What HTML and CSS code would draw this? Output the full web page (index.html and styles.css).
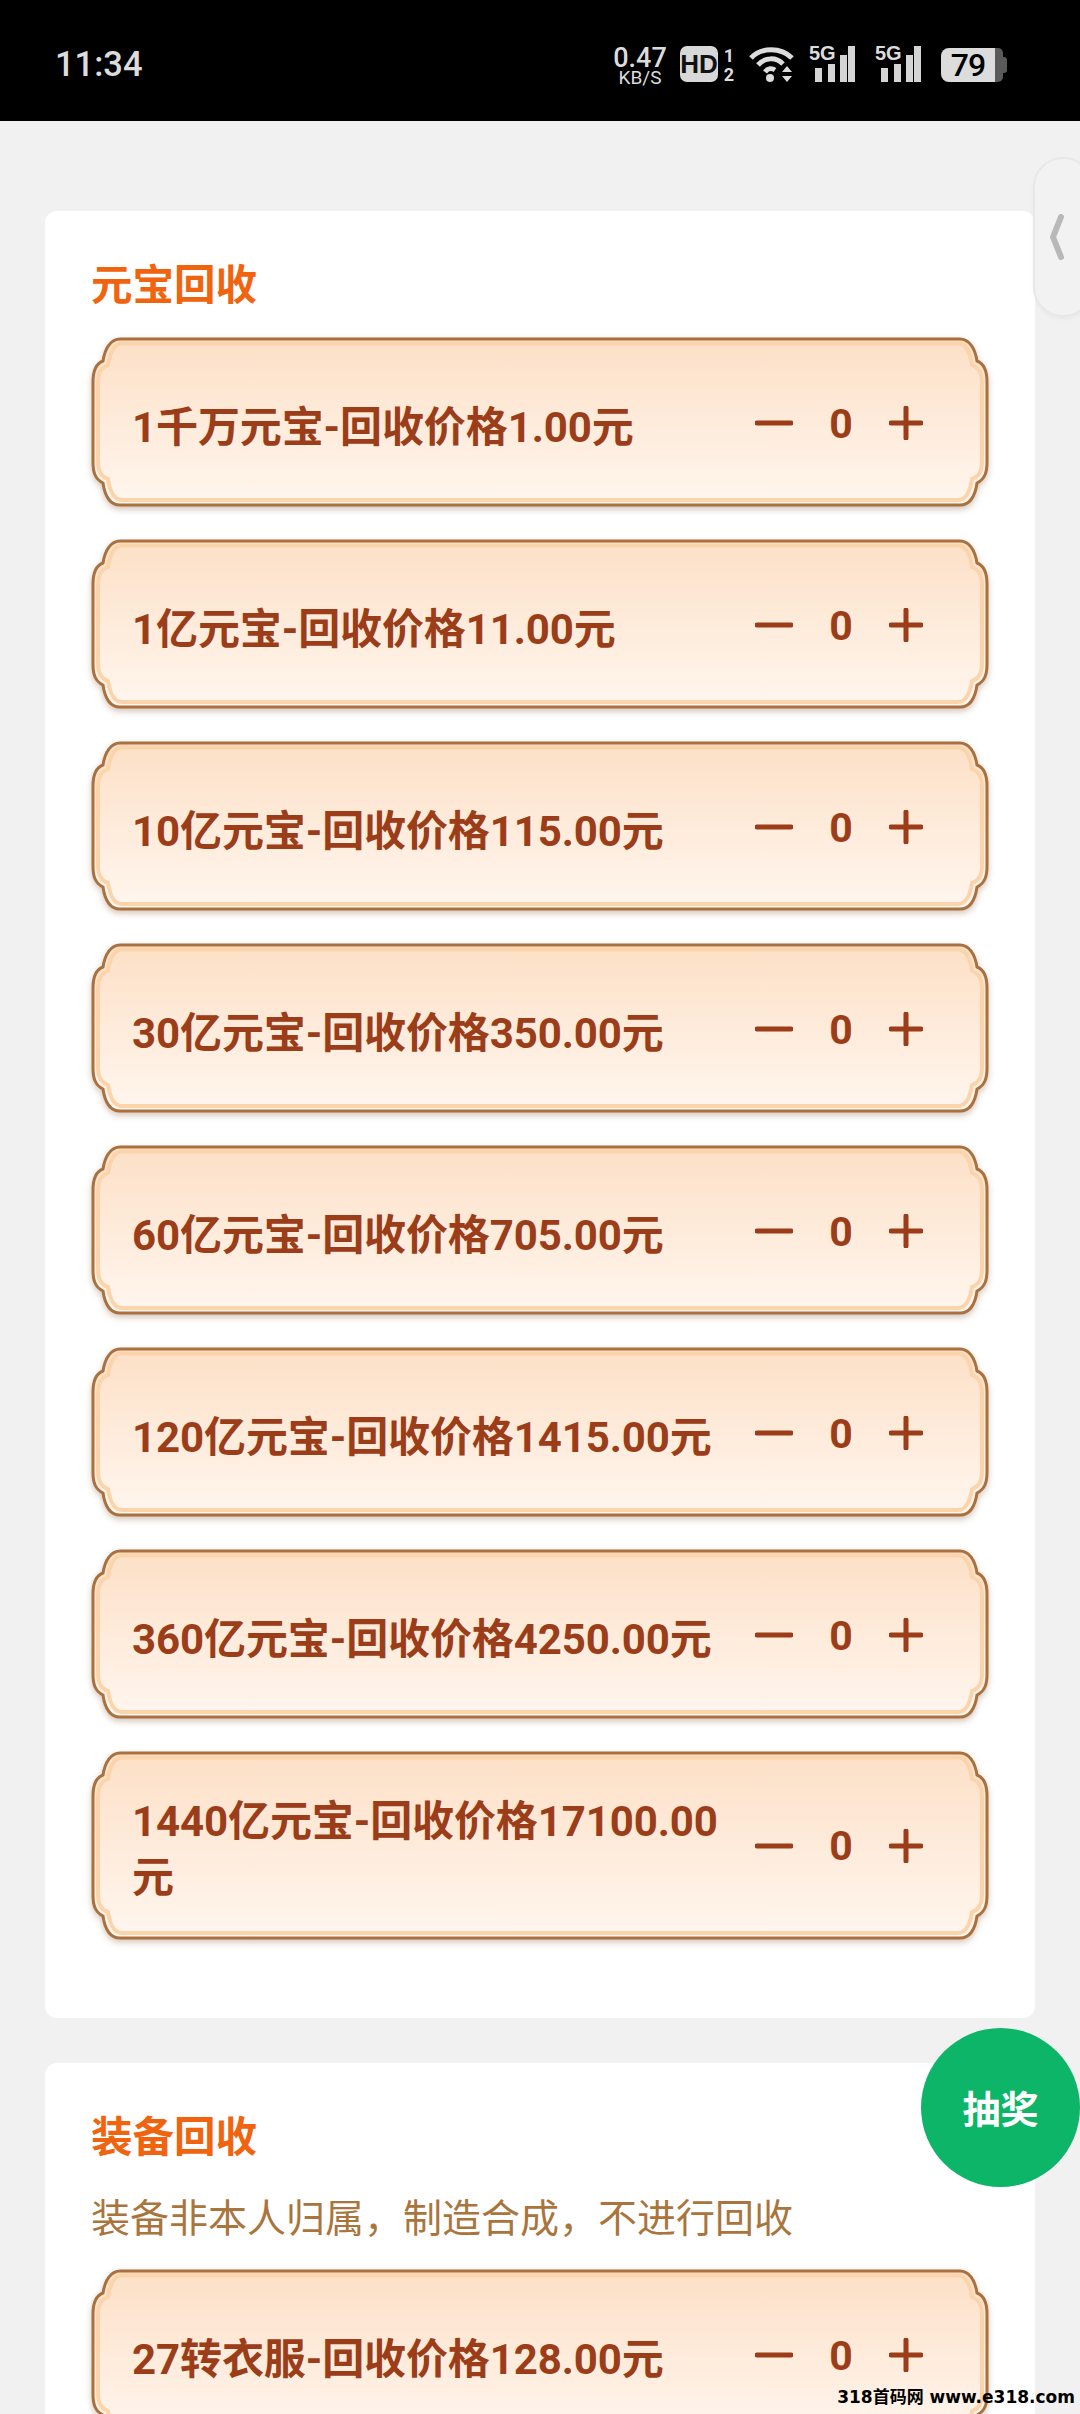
FILE: index.html
```html
<!DOCTYPE html>
<html lang="zh-CN">
<head>
    <meta charset="UTF-8">
    <title>元宝回收</title>
    <meta name="viewport" content="width=device-width, initial-scale=1.0">
    <link rel="stylesheet" href="styles.css">
</head>
<body>
    <svg class="defs" width="0" height="0">
        <defs>
            <linearGradient id="rowfill" x1="0" y1="0" x2="0" y2="1">
                <stop offset="0" stop-color="#fde0c7"/>
                <stop offset="1" stop-color="#fff6ee"/>
            </linearGradient>
            <symbol id="frame" viewBox="0 0 900 174">
                <path d="M30 3H870C879 3 885 12 887 25C895 28 897 36 897 46V126C897 136 895 143 887 147C885 161 879 169 870 169H30C21 169 15 161 13 147C5 143 3 136 3 126V46C3 36 5 28 13 25C15 12 21 3 30 3Z" fill="url(#rowfill)" stroke="#a9713f" stroke-width="3"/>
                <path d="M32 7.5H868C876 7.5 880 16 882 29C890 32 892 38 892 48V124C892 134 890 140 882 143C880 156 876 164 868 164H32C24 164 20 156 18 143C10 140 8 134 8 124V48C8 38 10 32 18 29C20 16 24 7.5 32 7.5Z" fill="none" stroke="#fbd4ab" stroke-width="4"/>
            </symbol>
            <symbol id="frame-tall" viewBox="0 0 900 194">
                <path d="M30 3H870C879 3 885 12 887 25C895 28 897 36 897 46V145C897 155 895 162 887 166C885 180 879 188 870 188H30C21 188 15 180 13 166C5 162 3 155 3 145V46C3 36 5 28 13 25C15 12 21 3 30 3Z" fill="url(#rowfill)" stroke="#a9713f" stroke-width="3"/>
                <path d="M32 7.5H868C876 7.5 880 16 882 29C890 32 892 38 892 48V143C892 153 890 159 882 162C880 175 876 183 868 183H32C24 183 20 175 18 162C10 159 8 153 8 143V48C8 38 10 32 18 29C20 16 24 7.5 32 7.5Z" fill="none" stroke="#fbd4ab" stroke-width="4"/>
            </symbol>
            <symbol id="minus" viewBox="0 0 38 34">
                <path d="M2 17H36" stroke="#9c3d19" stroke-width="5" stroke-linecap="round"/>
            </symbol>
            <symbol id="plus" viewBox="0 0 34 34">
                <path d="M2 17H32M17 2V32" stroke="#9c3d19" stroke-width="5" stroke-linecap="round" fill="none"/>
            </symbol>
            <symbol id="bars" viewBox="0 0 46 36">
                <rect x="6" y="22" width="7" height="14"/>
                <rect x="19" y="18" width="7" height="18"/>
                <rect x="31" y="9" width="7" height="27"/>
                <rect x="39" y="0" width="7" height="36"/>
            </symbol>
        </defs>
    </svg>

    <header class="statusbar">
        <span class="clock">11:34</span>
        <div class="status-icons">
            <div class="speed"><span class="speed-num">0.47</span><span class="speed-unit">KB/S</span></div>
            <span class="hd">HD</span>
            <div class="sim-nums"><span>1</span><span>2</span></div>
            <svg class="wifi" width="46" height="36" viewBox="0 0 46 36" fill="none" stroke="#dcdcdc" stroke-width="5">
                <path d="M2 12C12 1 32 1 43 12"/>
                <path d="M9 19C16 11 27 11 34 18"/>
                <path d="M16 26C19 22 23 22 26 24"/>
                <circle cx="21" cy="32" r="4" fill="#dcdcdc" stroke="none"/>
                <path d="M33 26L38 20L43 26ZM33 30L38 36L43 30Z" fill="#dcdcdc" stroke="none"/>
            </svg>
            <div class="signal">
                <span class="signal-label">5G</span>
                <svg class="signal-bars" width="46" height="36"><use href="#bars"/></svg>
            </div>
            <div class="signal">
                <span class="signal-label">5G</span>
                <svg class="signal-bars" width="46" height="36"><use href="#bars"/></svg>
            </div>
            <div class="battery"><span class="battery-level">79</span><span class="battery-rest"></span><span class="battery-cap"></span></div>
        </div>
    </header>

    <main class="page">
        <section class="card card-first">
            <h2 class="card-title">元宝回收</h2>
            <div class="rows">
                <div class="row">
                    <svg class="row-bg"><use href="#frame"/></svg>
                    <div class="row-name">1千万元宝-回收价格1.00元</div>
                    <div class="stepper"><svg class="btn-minus"><use href="#minus"/></svg><span class="count">0</span><svg class="btn-plus"><use href="#plus"/></svg></div>
                </div>
                <div class="row">
                    <svg class="row-bg"><use href="#frame"/></svg>
                    <div class="row-name">1亿元宝-回收价格11.00元</div>
                    <div class="stepper"><svg class="btn-minus"><use href="#minus"/></svg><span class="count">0</span><svg class="btn-plus"><use href="#plus"/></svg></div>
                </div>
                <div class="row">
                    <svg class="row-bg"><use href="#frame"/></svg>
                    <div class="row-name">10亿元宝-回收价格115.00元</div>
                    <div class="stepper"><svg class="btn-minus"><use href="#minus"/></svg><span class="count">0</span><svg class="btn-plus"><use href="#plus"/></svg></div>
                </div>
                <div class="row">
                    <svg class="row-bg"><use href="#frame"/></svg>
                    <div class="row-name">30亿元宝-回收价格350.00元</div>
                    <div class="stepper"><svg class="btn-minus"><use href="#minus"/></svg><span class="count">0</span><svg class="btn-plus"><use href="#plus"/></svg></div>
                </div>
                <div class="row">
                    <svg class="row-bg"><use href="#frame"/></svg>
                    <div class="row-name">60亿元宝-回收价格705.00元</div>
                    <div class="stepper"><svg class="btn-minus"><use href="#minus"/></svg><span class="count">0</span><svg class="btn-plus"><use href="#plus"/></svg></div>
                </div>
                <div class="row">
                    <svg class="row-bg"><use href="#frame"/></svg>
                    <div class="row-name">120亿元宝-回收价格1415.00元</div>
                    <div class="stepper"><svg class="btn-minus"><use href="#minus"/></svg><span class="count">0</span><svg class="btn-plus"><use href="#plus"/></svg></div>
                </div>
                <div class="row">
                    <svg class="row-bg"><use href="#frame"/></svg>
                    <div class="row-name">360亿元宝-回收价格4250.00元</div>
                    <div class="stepper"><svg class="btn-minus"><use href="#minus"/></svg><span class="count">0</span><svg class="btn-plus"><use href="#plus"/></svg></div>
                </div>
                <div class="row row-tall">
                    <svg class="row-bg"><use href="#frame-tall"/></svg>
                    <div class="row-name">1440亿元宝-回收价格17100.00元</div>
                    <div class="stepper"><svg class="btn-minus"><use href="#minus"/></svg><span class="count">0</span><svg class="btn-plus"><use href="#plus"/></svg></div>
                </div>
            </div>
        </section>

        <section class="card">
            <h2 class="card-title">装备回收</h2>
            <p class="card-note">装备非本人归属，制造合成，不进行回收</p>
            <div class="rows">
                <div class="row">
                    <svg class="row-bg"><use href="#frame"/></svg>
                    <div class="row-name">27转衣服-回收价格128.00元</div>
                    <div class="stepper"><svg class="btn-minus"><use href="#minus"/></svg><span class="count">0</span><svg class="btn-plus"><use href="#plus"/></svg></div>
                </div>
            </div>
        </section>
    </main>

    <aside class="side-tab">
        <svg width="14" height="46" viewBox="0 0 14 46"><path d="M11 3L3 23L11 43" fill="none" stroke="#b8b8b8" stroke-width="6" stroke-linecap="round" stroke-linejoin="round"/></svg>
    </aside>
    <button class="fab">抽奖</button>
    <div class="watermark">318首码网 www.e318.com</div>
</body>
</html>
```

FILE: styles.css
```css
* {
    box-sizing: border-box;
}
html, body {
    margin: 0;
    height: 2414px;
    overflow: hidden;
}
body {
    position: relative;
    font-family: Roboto, "Noto Sans CJK SC", sans-serif;
    background-color: #f1f1f1;
}
.defs {
    position: absolute;
}

/* status bar */
.statusbar {
    height: 121px;
    background-color: #000;
    color: #dcdcdc;
    display: flex;
    align-items: flex-start;
    justify-content: space-between;
    padding: 46px 73px 0 55px;
}
.clock {
    font-size: 34.5px;
    font-weight: 500;
    line-height: 36px;
}
.status-icons {
    display: flex;
    align-items: flex-start;
}
.speed {
    width: 56px;
    margin-right: 12px;
    display: flex;
    flex-direction: column;
    align-items: center;
}
.speed-num {
    font-size: 27px;
    font-weight: 500;
    line-height: 24px;
}
.speed-unit {
    margin-top: 1px;
    font-size: 19px;
    line-height: 14px;
}
.hd {
    width: 38px;
    height: 36px;
    background-color: #d8d8d8;
    border-radius: 7px;
    color: #111;
    font-family: "Liberation Sans Narrow", "Liberation Sans", sans-serif;
    font-size: 26px;
    font-weight: 700;
    line-height: 36px;
    text-align: center;
}
.sim-nums {
    width: 14px;
    margin: 0 13px 0 4px;
    display: flex;
    flex-direction: column;
    font-size: 18px;
    font-weight: 700;
    line-height: 19px;
    text-align: center;
}
.wifi {
    margin-right: 14px;
}
.signal {
    position: relative;
    width: 46px;
    height: 36px;
    margin-right: 20px;
}
.signal-label {
    position: absolute;
    left: 0;
    top: -4px;
    font-family: "Liberation Sans Narrow", "Liberation Sans", sans-serif;
    font-size: 20px;
    font-weight: 700;
    line-height: 22px;
}
.signal-bars {
    fill: #d4d4d4;
}
.battery {
    display: flex;
    height: 34px;
    margin: 2px 0 0 0;
    align-items: center;
}
.battery-level {
    width: 54px;
    height: 34px;
    background-color: #dcdcdc;
    border-radius: 8px 0 0 8px;
    color: #000;
    font-size: 32px;
    font-weight: 500;
    letter-spacing: -1px;
    line-height: 34px;
    text-align: center;
}
.battery-rest {
    width: 8px;
    height: 34px;
    background-color: #5a5a5a;
    border-radius: 0 5px 5px 0;
}
.battery-cap {
    width: 4px;
    height: 16px;
    background-color: #5a5a5a;
    border-radius: 0 3px 3px 0;
}

/* cards */
.page {
    padding: 90px 45px 0 45px;
}
.card {
    background-color: #fff;
    border-radius: 12px;
    padding: 46px 47px 40px 46px;
}
.card-first {
    padding-bottom: 79px;
    margin-bottom: 45px;
}
.card-title {
    margin: 0 0 27px;
    padding-top: 4px;
    font-size: 41.5px;
    font-weight: 700;
    line-height: 50px;
    color: #f1640f;
}
.card-note {
    margin: -1px 0 21px;
    font-size: 39px;
    font-weight: 400;
    line-height: 60px;
    color: #a9753d;
}
.rows {
    display: flex;
    flex-direction: column;
    gap: 32px;
    margin-left: 1px;
}
.row {
    position: relative;
    width: 896px;
    height: 170px;
    display: flex;
    align-items: center;
    padding: 0 65px 0 40px;
}
.row-tall {
    height: 187px;
}
/* frame sits behind the row content, a little bigger than the row box */
.row-bg {
    position: absolute;
    left: -2px;
    top: -2px;
    width: 900px;
    height: 174px;
    filter: drop-shadow(0 3px 3px rgba(120, 70, 30, 0.3));
}
.row-tall .row-bg {
    height: 194px;
}
.row-name {
    position: relative;
    flex: 1;
    padding-top: 9px;
    font-size: 42px;
    font-weight: 700;
    letter-spacing: -0.1px;
    line-height: 56px;
    color: #9c3d19;
    word-break: break-all;
}
.stepper {
    position: relative;
    width: 168px;
    display: flex;
    align-items: center;
    justify-content: space-between;
}
.btn-minus {
    width: 38px;
    height: 34px;
}
.btn-plus {
    width: 34px;
    height: 34px;
}
.count {
    margin-top: 1px;
    font-size: 41px;
    font-weight: 700;
    line-height: 40px;
    color: #9c3d19;
}

/* floating things */
.side-tab {
    position: absolute;
    left: 1033px;
    top: 157px;
    width: 60px;
    height: 160px;
    background-color: #f2f2f2;
    border: 2px solid #e8e8e8;
    border-radius: 34px;
    box-shadow: 0 2px 4px rgba(0, 0, 0, 0.04);
    padding: 55px 0 0 15px;
}
.fab {
    position: absolute;
    left: 921px;
    top: 2028px;
    width: 159px;
    height: 159px;
    border: none;
    border-radius: 50%;
    padding: 0 0 3px;
    background-color: #0db568;
    color: #fff;
    font-family: inherit;
    font-size: 38px;
    font-weight: 700;
}
.watermark {
    position: absolute;
    right: 5px;
    top: 2384px;
    font-family: "DejaVu Sans", "Noto Sans CJK SC", sans-serif;
    font-size: 17px;
    font-weight: 700;
    line-height: 26px;
    color: #000;
    white-space: nowrap;
}
```
